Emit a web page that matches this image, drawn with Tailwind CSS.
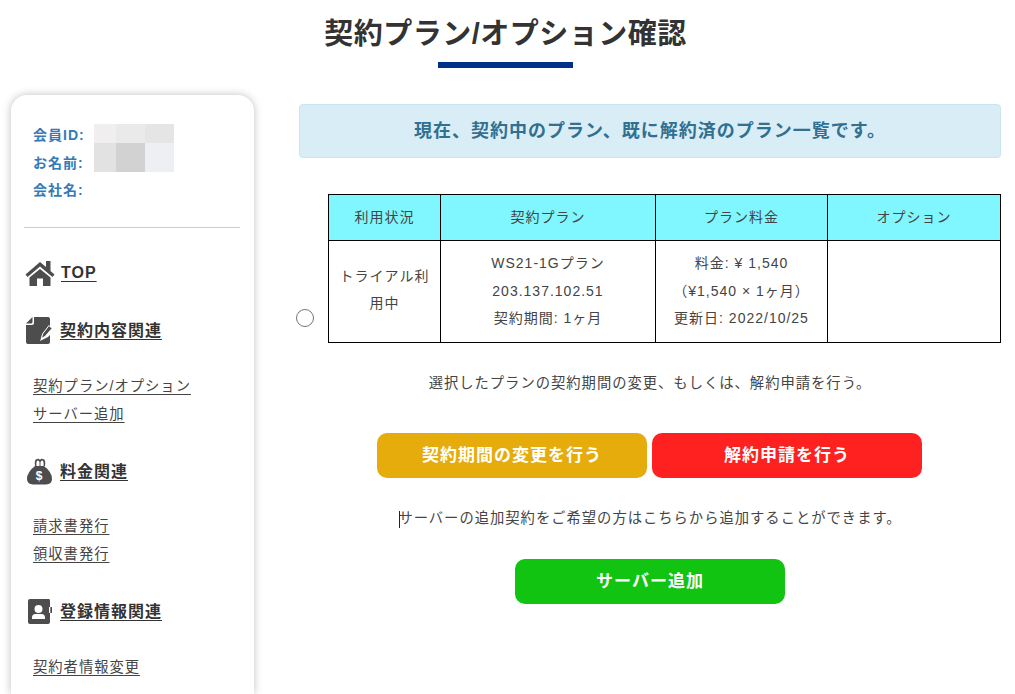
<!DOCTYPE html>
<html lang="ja">
<head>
  <meta charset="UTF-8" />
  <meta name="viewport" content="width=device-width, initial-scale=1" />
  <title>契約プラン/オプション確認</title>
  <script src="https://cdn.jsdelivr.net/npm/@tailwindcss/browser@4"></script>
</head>
<body class="bg-white h-[694px] overflow-hidden font-['Liberation_Sans','Noto_Sans_CJK_JP',sans-serif] text-[#333]">
  <header class="flex flex-col items-center h-[95px] pr-[4px]">
    <h1 class="mt-[13px] text-[29px] leading-[42px] font-bold tracking-[0.5px] text-[#333]">契約プラン/オプション確認</h1>
    <div class="mt-[7px] w-[135px] h-[6px] bg-[#003087]"></div>
  </header>

  <div class="flex items-start">
    <!-- side menu -->
    <aside class="ml-[11px] w-[243px] h-[599px] shrink-0 bg-white rounded-t-[16px] shadow-[0_0_8px_rgba(0,0,0,0.25)] pl-[13px] pr-[14px] pt-[27px]">
      <div class="relative pl-[9px] pb-[22px] border-b border-[#ccc] text-[14px] font-bold leading-[27.5px] tracking-[1px] text-[#337ab7]">
        <p>会員ID:</p>
        <p>お名前:</p>
        <p>会社名:</p>
        <div class="absolute left-[70px] top-[2px] w-[80px] h-[48px] grid grid-cols-[22px_29px_29px] grid-rows-[19px_29px]">
          <span class="bg-[#f0eeee]"></span><span class="bg-[#ebeaea]"></span><span class="bg-[#e6e5e5]"></span>
          <span class="bg-[#e2e2e2]"></span><span class="bg-[#d3d2d2]"></span><span class="bg-[#edeff2]"></span>
        </div>
      </div>

      <a class="mt-[30px] flex items-center h-[30px] text-[16px] font-bold tracking-[1px] text-[#333]">
        <svg class="w-[30px] h-[28px] ml-[1px] mr-[6px] text-[#4d4d4d]" viewBox="0 0 30 28" fill="currentColor"><path d="M15 3 L21 8 V2 H25.5 V12 L29.5 15.5 L27.5 18 L15 7.5 L2.5 18 L0.5 15.5 Z"/><path d="M15 10 L25.5 18.6 V27 H18 V19.5 H12 V27 H4.5 V18.6 Z"/></svg>
        <span class="underline underline-offset-[3px]">TOP</span>
      </a>

      <a class="mt-[28px] flex items-center h-[30px] text-[16px] font-bold tracking-[1px] text-[#333]">
        <svg class="w-[26px] h-[27px] ml-[2px] mr-[8px] text-[#4d4d4d]" viewBox="0 0 26 27" fill="currentColor"><path d="M8 0 H22 Q24 0 24 2 V8.5 L17 16 L14 24 L22 20 L24 18 V25 Q24 27 22 27 H2 Q0 27 0 25 V8 H6 Q8 8 8 6 Z"/><path d="M0 6.5 L6.5 0 V5 Q6.5 6.5 5 6.5 Z"/><path d="M23 8.5 L26 11.5 L19 19.5 L15.5 21.5 L16.5 17 Z" stroke="#fff" stroke-width="1"/></svg>
        <span class="underline underline-offset-[3px]">契約内容関連</span>
      </a>

      <div class="mt-[26px] pl-[9px] flex flex-col text-[14.3px] leading-[28px] tracking-[1px] text-[#444]">
        <a class="underline underline-offset-[3px]">契約プラン/オプション</a>
        <a class="underline underline-offset-[3px]">サーバー追加</a>
      </div>

      <a class="mt-[29px] flex items-center h-[30px] text-[16px] font-bold tracking-[1px] text-[#333]">
        <svg class="w-[27px] h-[27px] ml-[2px] mr-[7px] text-[#4d4d4d]" viewBox="0 0 27 27" fill="currentColor"><path d="M9 8 Q8 1 11 1 Q13 0 14 2 Q15 0 17 1 Q20 1 19 8 H17.5 Q18 3 16.5 2.5 Q15 2.5 14.5 4 V8 H13.5 V4 Q13 2.5 11.5 2.5 Q10 3 10.5 8 Z"/><path d="M9 8 H18 Q26 14 26 21 Q26 26 20 26.5 H7 Q1 26 1 21 Q1 14 9 8 Z"/><text x="13.5" y="22" text-anchor="middle" font-size="12" font-weight="700" fill="#fff" font-family="Liberation Sans">$</text></svg>
        <span class="underline underline-offset-[3px]">料金関連</span>
      </a>

      <div class="mt-[25px] pl-[9px] flex flex-col text-[14.3px] leading-[28px] tracking-[1px] text-[#444]">
        <a class="underline underline-offset-[3px]">請求書発行</a>
        <a class="underline underline-offset-[3px]">領収書発行</a>
      </div>

      <a class="mt-[29px] flex items-center h-[30px] text-[16px] font-bold tracking-[1px] text-[#333]">
        <svg class="w-[24px] h-[25px] ml-[4px] mr-[8px] text-[#4d4d4d]" viewBox="0 0 24 25" fill="currentColor"><path fill-rule="evenodd" d="M2 0 H21 Q22 0 22 2 V8 H21 V14 H22 V23 Q22 25 20 25 H2 Q0 25 0 23 V2 Q0 0 2 0 Z M10.5 6 A4 4 0 1 0 10.5 14 A4 4 0 1 0 10.5 6 Z M4 20 H17 V18.5 Q17 15 13.5 15 H7.5 Q4 15 4 18.5 Z"/><rect x="22.3" y="8" width="1.7" height="6"/></svg>
        <span class="underline underline-offset-[3px]">登録情報関連</span>
      </a>

      <div class="mt-[26px] pl-[9px] flex flex-col text-[14.3px] leading-[28px] tracking-[1px] text-[#444]">
        <a class="underline underline-offset-[3px]">契約者情報変更</a>
      </div>
    </aside>

    <!-- main -->
    <main class="ml-[45px] w-[702px] pt-[9px] text-[#444]">
      <div class="h-[54px] flex items-center justify-center bg-[#d9edf7] border border-[#c9e6ee] rounded-[4px] text-[18px] font-bold tracking-[1px] text-[#31708f]">
        現在、契約中のプラン、既に解約済のプラン一覧です。
      </div>

      <div class="mt-[36px] flex items-end">
        <input type="radio" name="plan" class="w-[18px] h-[18px] mb-[16px] ml-[-3px] mr-[14px] shrink-0 accent-[#767676]" />
        <table class="w-[672px] table-fixed border-collapse text-[14px] tracking-[1px] text-center text-[#444]">
          <colgroup>
            <col class="w-[112px]" /><col class="w-[215px]" /><col class="w-[172px]" /><col class="w-[173px]" />
          </colgroup>
          <thead>
            <tr class="h-[46px] bg-[#80f7ff]">
              <th class="border border-black font-normal">利用状況</th>
              <th class="border border-black font-normal">契約プラン</th>
              <th class="border border-black font-normal">プラン料金</th>
              <th class="border border-black font-normal">オプション</th>
            </tr>
          </thead>
          <tbody>
            <tr class="h-[102px] leading-[27.5px]">
              <td class="border border-black px-[10px] pb-[3px]">トライアル利用中</td>
              <td class="border border-black">WS21-1Gプラン<br />203.137.102.51<br />契約期間: 1ヶ月</td>
              <td class="border border-black">料金: ¥ 1,540<br />（¥1,540 × 1ヶ月）<br />更新日: 2022/10/25</td>
              <td class="border border-black"></td>
            </tr>
          </tbody>
        </table>
      </div>

      <p class="mt-[30px] text-center text-[14.3px] leading-[21px] tracking-[1px]">選択したプランの契約期間の変更、もしくは、解約申請を行う。</p>

      <div class="mt-[39px] pr-[1px] flex justify-center gap-[5px]">
        <button class="w-[270px] h-[45px] rounded-[10px] bg-[#e5ac0c] text-white text-[17px] font-bold tracking-[1px]">契約期間の変更を行う</button>
        <button class="w-[270px] h-[45px] rounded-[10px] bg-[#ff2020] text-white text-[17px] font-bold tracking-[1px]">解約申請を行う</button>
      </div>

      <p class="mt-[30px] text-center text-[14.3px] leading-[21px] tracking-[1px]"><span class="relative">サーバーの追加契約をご希望の方はこちらから追加することができます。<span class="absolute left-[1px] top-[1px] w-px h-[17px] bg-[#222]"></span></span></p>

      <div class="mt-[30px] flex justify-center">
        <button class="w-[270px] h-[45px] rounded-[10px] bg-[#12c412] text-white text-[17px] font-bold tracking-[1px]">サーバー追加</button>
      </div>
    </main>
  </div>
</body>
</html>
